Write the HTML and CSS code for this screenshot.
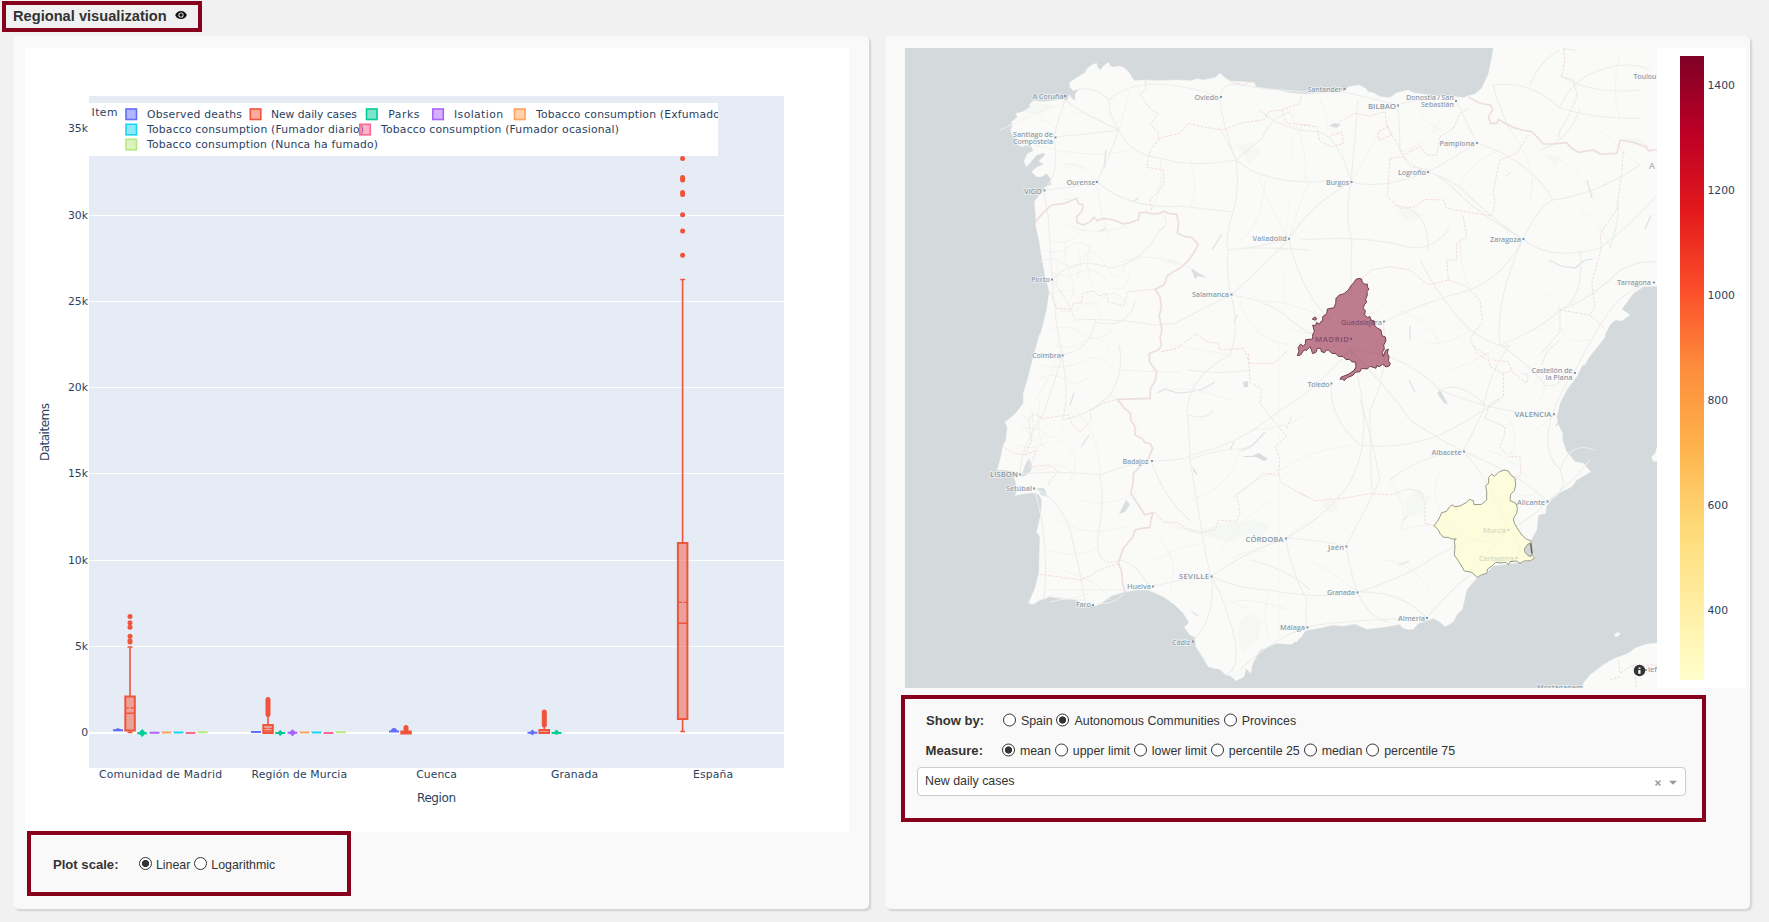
FILE: index.html
```html
<!DOCTYPE html>
<html lang="en">
<head>
<meta charset="utf-8">
<title>Regional visualization</title>
<link rel="stylesheet" href="styles.css">
</head>
<body>
<header class="title marked">
  <h1>Regional visualization</h1>
  <svg class="eye" width="12" height="10" viewBox="0 0 12 10"><path d="M6 .9C3.200 .9 1 2.600 .2 5 1 7.400 3.200 9.100 6 9.100S11 7.400 11.800 5C11 2.600 8.800 .9 6 .9z"/><circle cx="6" cy="5" r="2.600" fill="#f1f1f1"/><circle cx="6" cy="5" r="1.700"/></svg>
</header>
<main class="cards">
<section class="card left">
  <svg class="chart" width="824" height="784" viewBox="25 48 824 784">
    <defs>
      <clipPath id="legendClip"><rect x="89" y="103" width="629" height="53"/></clipPath>
    </defs>
    <rect x="25" y="48" width="824" height="784" fill="#fff"/>
    <rect x="89" y="96" width="695" height="672" fill="#e5ecf6"/>
    <path d="M89 215.500H784M89 301.500H784M89 387.500H784M89 473.500H784M89 560.500H784M89 646.500H784" stroke="#fff"/>
    <path d="M89 733H784" stroke="#fff" stroke-width="2"/>

    <g class="boxes" fill="none" stroke-width="2">
      <g stroke="#636efa" fill="#636efa">
        <path d="M113 730.200h10M251 732h10M389 731.500h10M527.500 732.700h10"/>
        <path stroke="none" d="M391 731a3 3 0 1 1 6 0zM529.500 732.500l2.900-3 2.900 3-2.900 3z"/>
        <path stroke="none" d="M114 730l4-2 4 2z"/>
      </g>
      <g stroke="#ef553b">
        <g fill="#ef553b" fill-opacity=".5">
          <rect x="125.300" y="696.500" width="9.500" height="34"/>
          <rect x="263.300" y="725" width="9.500" height="8"/>
          <rect x="401.300" y="731.500" width="9.500" height="2"/>
          <rect x="539.500" y="730" width="9.500" height="3"/>
          <rect x="677.900" y="543" width="9.500" height="176"/>
        </g>
        <path stroke-width="1.600" d="M130 647.300V696M130 731V733M127.500 647h5M127.500 732.500h5M268 716V725M682.600 279V543M682.600 719V731.500M680.300 279.500h4.800M680.300 731.500h4.800M544.300 726v4M125 713.300h10M263 731h10M678 623.200h9.500" />
        <path stroke-width="1.200" stroke-dasharray="4 1.500" d="M125 707.800h10M263 728.500h10M678 602.400h9.500"/>
        <path stroke-width="5" stroke-linecap="round" d="M268 699.500V714.500M406 727.500V731M544.300 712V725M682.600 177.500V180M682.600 192.500V194.500M130 640.700V642"/>
      </g>
      <g fill="#ef553b">
        <circle cx="130" cy="616.500" r="2.500"/><circle cx="130" cy="622.700" r="2.500"/><circle cx="130" cy="627.300" r="2.500"/><circle cx="130" cy="636.300" r="2.500"/>
        <circle cx="682.600" cy="158.500" r="2.500"/><circle cx="682.600" cy="214.700" r="2.500"/><circle cx="682.600" cy="231" r="2.500"/><circle cx="682.600" cy="255.300" r="2.500"/>
      </g>
      <path stroke="#00cc96" d="M137.200 733.200h10M275.200 733h10M551.500 733h10"/>
      <path fill="#00cc96" d="M138.500 733l3.700-4 3.700 4-3.700 4zM277 733l3.200-3 3.200 3-3.200 3zM553 733l3.500-3.600 3.500 3.600-3.500 2z"/>
      <path stroke="#ab63fa" d="M149.500 732.800h10M287.500 732.800h10"/>
      <path fill="#ab63fa" d="M288.700 732.700l3.800-3.500 3.800 3.500-3.800 3.500z"/>
      <path stroke="#ffa15a" d="M161.500 732.500h10M299.500 732.600h10"/>
      <path stroke="#19d3f3" d="M173.500 732.500h10M311.500 732.500h10"/>
      <path stroke="#ff6692" d="M185.500 732.900h10M323.500 732.900h10"/>
      <path stroke="#b6e880" d="M197.700 732.300h10M335.700 732.300h10"/>
    </g>

    <rect x="89" y="103" width="629" height="53" fill="#fff"/>
    <g class="swatch">
      <rect x="126" y="109" width="10.500" height="10.500" fill="#636efa" stroke="#636efa"/>
      <rect x="250.300" y="109" width="10.500" height="10.500" fill="#ef553b" stroke="#ef553b"/>
      <rect x="366.500" y="109" width="10.500" height="10.500" fill="#00cc96" stroke="#00cc96"/>
      <rect x="432.800" y="109" width="10.500" height="10.500" fill="#ab63fa" stroke="#ab63fa"/>
      <rect x="514.500" y="109" width="10.500" height="10.500" fill="#ffa15a" stroke="#ffa15a"/>
      <rect x="126" y="124.300" width="10.500" height="10.500" fill="#19d3f3" stroke="#19d3f3"/>
      <rect x="126" y="139.300" width="10.500" height="10.500" fill="#b6e880" stroke="#b6e880"/>
    </g>
    <g class="tick" clip-path="url(#legendClip)">
      <text x="91.500" y="115.500" textLength="26">Item</text>
      <text x="147" y="118.300" textLength="95">Observed deaths</text>
      <text x="271" y="118.300" textLength="86">New daily cases</text>
      <text x="388.300" y="118.300" textLength="31">Parks</text>
      <text x="454" y="118.300" textLength="49">Isolation</text>
      <text x="536" y="118.300" textLength="193">Tobacco consumption (Exfumador)</text>
      <text x="147" y="133.300" textLength="217">Tobacco consumption (Fumador diario)</text>
      <text x="381" y="133.300" textLength="238">Tobacco consumption (Fumador ocasional)</text>
      <text x="147" y="148.300" textLength="231">Tobacco consumption (Nunca ha fumado)</text>
    </g>
    <g class="swatch"><rect x="359.800" y="124.300" width="10.500" height="10.500" fill="#ff6692" stroke="#ff6692"/></g>

    <g class="tick" text-anchor="end">
      <text x="88" y="132">35k</text><text x="88" y="219">30k</text><text x="88" y="305">25k</text><text x="88" y="391">20k</text><text x="88" y="477">15k</text><text x="88" y="564">10k</text><text x="88" y="650">5k</text><text x="88" y="736">0</text>
    </g>
    <g class="tick">
      <text x="99" y="778.300" textLength="123">Comunidad de Madrid</text>
      <text x="251.500" y="778.300" textLength="95.500">Región de Murcia</text>
      <text x="416.300" y="778.300" textLength="40.500">Cuenca</text>
      <text x="551" y="778.300" textLength="47">Granada</text>
      <text x="693" y="778.300" textLength="40">España</text>
    </g>
    <g class="axis">
      <text x="417" y="802.300" textLength="39">Region</text>
      <text transform="translate(49 461) rotate(-90)" textLength="58">Dataitems</text>
    </g>
  </svg>
  <div class="scale marked">
    <b>Plot scale:</b>
    <span class="radio on"></span><span>Linear</span><span class="radio"></span><span>Logarithmic</span>
  </div>
</section>

<section class="card right">
  <div class="plot">
  <svg class="map" width="752" height="640" viewBox="905 48 752 640">
    <rect x="905" y="48" width="752" height="640" fill="#d4dadc"/>
    <g class="land">
      <path transform="translate(890 30) scale(.33333)" d="M1300 196L1245 193 1200 188 1160 180 1120 175 1097 170 1093 158 1060 155 1020 153 1003 142 990 130 975 143 940 150 920 146 905 152 860 150 800 152 765 150 732 152 722 135 715 125 700 112 685 108 672 112 660 108 655 97 640 108 632 120 622 112 620 100 605 105 590 118 585 128 565 140 550 150 538 158 540 172 550 182 566 176 555 195 556 212 545 205 538 194 530 215 520 208 490 212 460 215 430 212 418 225 422 235 400 245 378 250 382 262 365 275 367 288 362 300 367 315 380 330 385 345 395 350 410 345 425 350 430 362 412 372 402 395 410 410 425 392 440 375 462 368 465 376 446 393 462 402 440 412 425 425 440 440 455 440 470 430 482 445 484 465 466 470 455 485 445 500 433 515 437 550 438 590 447 630 455 680 465 735 478 785 470 840 455 900 440 970 430 1010H1300z"/>
      <path transform="translate(1300 30) scale(.33333)" d="M-15 196L0 193 60 190 105 187 135 182 145 170 178 165 200 178 203 185 220 188 240 200 270 203 290 188 325 180 340 188 380 194 430 200 465 200 490 203 505 197 525 192 545 175 566 130 575 85 581 50H1080V768L1030 770 1000 790 965 838 990 855 965 872 945 870 930 885 905 930 865 985 855 1005H-60z"/>
      <path transform="translate(890 340) scale(.33333)" d="M450 -20L430 50 415 110 400 160 400 190 375 222 345 247 352 262 348 300 338 320 333 350 322 390 345 390 375 395 385 402 372 410 378 432 382 450 375 467 395 462 425 458 445 462 455 480 453 520 440 577 450 590 448 650 447 700 435 745 416 790 430 793 450 780 480 770 530 775 560 780 590 795 620 797 640 785 665 767 700 757 740 750 775 750 820 770 855 795 880 820 897 848 883 862 900 885 915 890 918 920 940 955 955 980 972 985 990 988 1005 1003 1022 1008 1038 1022 1062 1010 1068 985 1082 1000 1088 970 1110 930 1160 910 1205 913 1235 890 1245 872 1300 862V-20z"/>
      <path transform="translate(1300 340) scale(.33333)" d="M-60 900L-10 905 5 885 22 864 60 863 100 855 130 858 165 852 200 867 250 862 300 853 305 862 320 868 340 868 355 850 400 835 420 845 435 860 460 845 470 825 487 808 500 750 532 712 560 698 580 677 625 672 690 662 704 653 697 635 692 602 710 570 715 525 737 520 738 500 765 465 815 440 830 420 872 395 850 370 825 365 800 335 787 300 788 280 775 255 770 230 780 190 800 150 830 110 850 70 880 35 915 -8V-30H-60zM1071 910L1040 912 1005 925 985 940 940 957 910 975 870 1005 850 1030 848 1050H1080zM1071 322L1066 340 1055 350 1060 365 1075 362zM942 886l10-9 10 4-12 10z"/>
    </g>
    <g class="water">
      <path d="M1021 477l4-12 4-7 3 8-1 5-6 5zM1037 488l7 0 4 9-7-2zM1126 500l4 4-5 8-6 2 4-8zM1191 268l6 4 10 6-9-2-3 3zM1329 126l5-3 7 1-4 4zM1237 387l7 0-1-5 5-1 0 6zM1437 393l7 10 4 1-8-14zM1243 456l9 0 7-3 9 6-4 2-8-4-12 0zM1559 420l-4 6 3-1zM1192 466l7 10-5-4zM1533 548l2-6 2 4z"/>
      <path class="river" d="M1157 393l8-4 12 4 12-1 14-3 12-7M1241 451l12-6 12-13M1549 260l12 6 14 2 10-8 8-1M1106 150l-2 18M1587 180l5 18M1651 215l-6 14M1409 380l6 12M1192 612l6 4M1230 450l4-8M1070 405l4-12M1081 447l8-12M1410 340l0-14M1399 565l10-4M1404 520l6-8M1212 250l10-16M1133 202l5-4M1100 231l6-3M1234 322l3-7"/>
    </g>
    <g class="park">
      <path d="M1151 516l30 14 30 7 18 6 20-10 10 6 12-14-20-5-28 4-26 6-22-4zM1240 620l10-6 12 6-4 20-14 12-6-10zM1405 500l14-10 12 8-8 14-16 6zM1321 500l10-4 8 12-10 6zM1545 155l16 2-6 8zM1022 112l14-9 16 2-12 10zM1237 145l14-3 10 10-12 12zM1395 212l16-4 12 8-14 6zM1618 137l22 2 10 8-18-2zM1165 262l8-4 7 8z"/>
    </g>
    <g class="road">
      <path d="M1054 137Q1058 118 1065 100Q1080 112 1119 130Q1130 155 1160 158Q1190 168 1236 160M1044 190Q1060 175 1054 137Q1080 135 1119 130M1044 190Q1070 188 1097 182Q1112 150 1119 130M1097 182Q1130 210 1180 206Q1215 210 1233 212M1119 130Q1108 115 1109 100Q1120 88 1148 84Q1185 84 1220 97M1078 90Q1095 85 1109 100M1220 97Q1222 125 1236 160Q1240 190 1233 212Q1225 235 1228 250Q1226 275 1231 295M1220 97Q1222 84 1235 84Q1290 94 1344 92Q1370 98 1398 105Q1425 96 1456 100M1236 160Q1225 135 1219 128M1236 160Q1248 150 1262 138Q1270 118 1290 112M1236 160Q1260 182 1315 182Q1335 180 1351 182M1228 250Q1255 248 1289 239Q1310 205 1351 182M1228 250Q1250 246 1310 250M1231 295Q1260 270 1289 239M1231 295Q1200 310 1172 325M1231 295Q1240 330 1230 355Q1190 375 1187 410Q1190 435 1190 460Q1200 520 1205 550Q1208 565 1211 576M1231 295Q1270 300 1290 320Q1310 335 1325 340M1289 239Q1300 290 1330 320M1351 182Q1344 215 1352 240Q1350 270 1352 300M1351 182Q1355 140 1358 100M1351 182Q1380 190 1428 172Q1450 160 1477 143Q1465 120 1456 100M1398 105Q1400 135 1400 152Q1415 170 1428 172Q1440 175 1455 190Q1480 215 1523 239Q1550 262 1600 248Q1625 230 1657 195M1428 172Q1458 182 1470 197Q1500 225 1530 244M1523 239Q1505 275 1470 290Q1430 300 1383 322M1523 239Q1540 205 1553 200Q1530 160 1477 143M1553 200Q1595 195 1640 165M1300 240Q1360 235 1400 245Q1430 255 1450 228M1395 205Q1430 210 1428 250"/>
      <path d="M1052 280Q1075 255 1110 268Q1140 265 1160 230Q1170 225 1164 215M1052 280Q1050 240 1048 215Q1045 200 1044 190M1052 280Q1055 320 1062 355Q1050 400 1040 420Q1020 450 1020 474M1052 280Q1068 300 1075 320Q1110 318 1155 325Q1160 325 1175 323M1062 355Q1090 350 1095 322Q1130 330 1135 300M1062 355Q1070 400 1062 420Q1090 415 1110 395Q1125 370 1119 345M1020 474Q1060 470 1100 475Q1125 465 1151 461Q1190 460 1190 455Q1240 445 1280 410Q1310 395 1350 350M1034 488Q1060 500 1070 530Q1080 570 1085 600M1034 488Q1050 540 1044 600M1100 475Q1105 500 1098 535Q1095 570 1120 560Q1140 565 1150 590M1151 461Q1165 500 1190 520M1153 586Q1180 580 1211 576Q1215 600 1205 625Q1198 635 1193 642M1211 576Q1250 550 1286 538Q1320 520 1345 490Q1380 440 1350 350M1211 576Q1240 590 1270 590Q1320 600 1357 592M1211 576Q1225 600 1235 640Q1240 670 1225 675M1286 538Q1290 570 1307 600Q1305 615 1307 627Q1270 640 1240 670M1307 627Q1340 620 1427 618Q1450 590 1470 575Q1485 555 1508 530M1346 546Q1350 570 1357 592Q1400 580 1430 560Q1460 540 1508 530M1357 592Q1370 620 1390 622M1427 618Q1400 590 1357 592M1187 370Q1220 375 1250 370M1187 415Q1210 420 1213 410M1190 460Q1210 450 1250 448M1250 560Q1290 570 1310 590M1286 538Q1320 540 1346 546Q1360 520 1380 480Q1370 430 1360 400"/>
      <path d="M1350 350Q1390 390 1410 420Q1440 440 1463 451Q1490 480 1508 530Q1530 520 1547 502Q1530 480 1463 451M1350 350Q1400 350 1440 390Q1500 415 1553 414Q1540 450 1560 470Q1570 490 1547 502M1383 322Q1390 370 1370 410Q1370 460 1372 490M1331 384Q1330 420 1360 445Q1400 450 1440 435Q1470 420 1500 400M1463 451Q1420 455 1390 480M1463 451Q1480 420 1485 405Q1460 380 1440 390M1553 414Q1560 390 1574 373Q1590 340 1610 310Q1625 290 1653 282M1500 345Q1495 300 1523 239M1500 345Q1530 365 1545 385Q1560 390 1565 370M1500 345Q1540 330 1560 310Q1590 300 1620 270Q1640 260 1657 262M1610 248Q1620 220 1618 200M1510 345Q1490 370 1484 405M1547 502Q1575 480 1590 460M1508 530Q1490 545 1470 540M1516 558Q1525 545 1508 530M1493 85Q1530 80 1560 108Q1600 120 1640 118M1493 85Q1500 110 1510 130M1580 108Q1570 140 1540 150M1530 85Q1540 60 1560 50M1560 108Q1570 80 1600 70Q1630 60 1650 70M1560 75Q1590 95 1640 90M1260 110Q1280 130 1320 132Q1340 140 1351 182M1420 260Q1440 300 1470 330Q1500 350 1510 345M1580 250Q1585 300 1560 310M1595 450Q1570 440 1560 470"/>
      <path class="thin" d="M1000 130Q1030 115 1060 104M1035 145Q1090 160 1130 150M1060 165Q1085 160 1097 182M1110 240Q1100 215 1097 182M1060 220Q1090 240 1130 225M1120 262Q1150 250 1190 268M1130 90Q1125 110 1119 130M1160 158Q1165 190 1150 212M1190 160Q1200 190 1190 206M1260 180Q1270 210 1289 239M1265 182Q1260 230 1240 240M1310 182Q1300 200 1289 239M1290 112Q1310 150 1305 182M1320 100Q1330 120 1326 130M1380 130Q1370 150 1351 182M1400 152Q1430 145 1440 120M1420 110Q1425 125 1440 130M1460 185Q1470 160 1500 150M1510 130Q1540 170 1530 200M1240 300Q1250 340 1290 345M1255 300Q1290 300 1330 320M1175 345Q1200 350 1230 355M1180 372Q1150 372 1120 370M1170 390Q1190 385 1230 400M1110 395Q1130 410 1140 430M1070 405Q1100 430 1100 475M1060 440Q1085 455 1070 480M1050 450Q1030 440 1020 420M1035 400Q1050 380 1055 360M1080 500Q1110 510 1140 490M1060 520Q1090 540 1130 525M1045 550Q1080 560 1100 545M1060 570Q1100 580 1110 600M1045 590Q1090 590 1130 590M1155 560Q1180 545 1200 545M1170 590Q1180 560 1160 540M1220 550Q1240 520 1270 500M1190 500Q1230 490 1240 450M1270 590Q1260 615 1270 640M1235 600Q1260 600 1290 610M1310 560Q1330 570 1357 592M1330 500Q1310 520 1286 538M1350 445Q1310 450 1280 470M1280 470Q1250 480 1230 500M1310 410Q1290 430 1250 430M1400 530Q1430 520 1460 530M1390 480Q1410 510 1400 530M1380 560Q1410 560 1430 590M1440 470Q1430 490 1440 510M1485 450Q1510 455 1530 480M1510 420Q1520 440 1510 455M1420 340Q1440 350 1470 330M1400 310Q1430 320 1440 345M1450 370Q1480 360 1500 345M1560 330Q1570 345 1590 340M1540 290Q1560 300 1560 310M1460 240Q1460 270 1470 290M1580 210Q1600 220 1610 248M1560 160Q1590 180 1595 200M1600 130Q1620 150 1640 165M1620 55Q1610 90 1620 118"/>
      <path class="thin" d="M1040 262q12-8 24 2t20-6 22 8 20-4M1044 250q14 6 26-4t22 6M1048 238q10 8 22 2t16-12M1050 272q16 8 30 0t28 10 22-8M1056 292q14-6 22 6t24 0 26 8M1058 308q14 8 24-2t20 10M1056 262q4 14-2 28M1066 240q-4 20 4 34t-2 30M1078 250q6 16-2 30M1090 245q-6 20 2 40M1050 330q18-8 32 4t30-4M1054 345q16 6 30-4t26 8M1042 365q22 6 40-4t32 8M1040 378q14-6 26 2t24-4M1022 415q12 10 24 4M1020 430q14-6 26 4t18-8M1018 445q14 6 28-2M1030 405q6 20 0 40M1040 400q-4 24 2 46M1028 465q10 8 22 2t26 8M1050 602q20-6 40 0t34-8M1048 596q20 6 40-2M1320 330q-14 6-26 0M1355 310q12 8 24 0M1060 195q8 8 20 2M1065 170q8-8 18-2M1070 115q14-6 22 4M1040 120q12 2 18 10M1510 490q14 10 28 2M1495 520q14-8 26 2M1540 400q8-14 2-26M1535 430q12-6 18-16M1230 560q16-12 34-8M1220 590q10 14 26 18"/>
    </g>
    <g class="border">
      <path transform="translate(890 30) scale(.33333)" d="M437 575L460 548 485 525 525 520 560 505 564 520 580 525 575 545 560 560 562 578 580 585 600 575 612 562 622 572 640 565 670 570 685 575 700 582 720 578 745 570 748 548 770 547 785 552 812 550 820 543 835 550 860 553 866 580 862 610 885 620 905 622 925 643 910 670 895 692 870 715 850 725 832 738 822 765 795 778 810 800 814 830 808 860 816 900 810 925 815 945 805 960 778 970"/>
      <path transform="translate(890 340) scale(.33333)" d="M778 40L778 65 800 95 795 125 782 145 780 175 683 178 700 202 722 220 722 240 735 260 735 285 755 295 765 308 780 310 788 325 775 355 755 375 730 400 730 425 722 460 742 490 765 525 790 517 783 540 780 562 755 565 735 570 728 592 700 625 685 670 695 695 698 730 705 757"/>
      <path transform="translate(1300 30) scale(.33333)" d="M505 200L530 215 550 222 572 225 578 240 565 260 572 280 590 280 596 268 615 280 640 292 665 300 695 305 715 325 730 342 760 342 800 338 815 355 835 367 880 360 900 372 950 370 956 350 960 330 1000 337 1040 352 1045 362 1071 360"/>
    </g>
    <g class="region">
      <path transform="translate(890 30) scale(.33333)" d="M765 152L768 180 750 190 760 210 785 240 805 250 780 285 805 305 805 330 780 360 770 412 820 420 822 465 780 510 785 545M805 325L870 310 895 280 935 290 1000 300 1050 280 1125 268 1135 245 1175 240 1190 280 1260 285M1175 240L1230 220 1235 195M1020 153L1060 165 1085 155M482 788L500 835 545 838 550 818 575 820 578 790 610 782 625 798 650 790 655 815 700 828 715 785 795 778M815 965L860 955 920 912 950 935 985 940 990 960 1060 955 1075 990"/>
      <path transform="translate(1300 30) scale(.33333)" d="M0 285L50 290 60 335 95 350 130 340 125 305 90 318M120 275L165 250 210 258 255 245 260 285 275 315 235 330 235 305 265 290M260 285L310 375 360 350 380 375 410 375 420 320 460 295 480 250 505 235M270 385L262 500 300 535 345 530 375 508 430 510 440 535 495 545 575 558 585 520 580 480 600 390 650 370 685 315M270 385L310 380 330 410 390 420M490 560L500 620 470 640 470 690 440 690 445 750 385 765 330 720 270 710 215 720 185 745M445 750L500 770 540 810 548 875 510 925 530 970 560 988M790 56L795 90 785 140 820 150 832 200 805 260 780 300 775 325M970 365L965 430 950 540 900 610 905 650 875 760 885 830 870 855 780 840 780 905 725 970M870 855L915 895M615 440L635 425M790 56L830 62"/>
      <path transform="translate(890 340) scale(.33333)" d="M683 178L640 190 600 212 605 240 570 275 545 250 535 225 460 235 430 222 415 240 425 300 405 345 370 340 338 320M405 345L440 330 420 380 480 375 505 395 480 420 475 440M450 703L500 710 575 720 630 690 685 670M795 517L820 545 860 548 890 565 925 578 975 570 985 540 1040 545 1050 515 1040 465 1080 435 1120 400 1165 405 1175 430 1260 475M1165 405L1170 360 1155 320 1190 290 1110 190 1115 150 1090 130M1190 265L1205 230M1075 40L1080 130M1075 70L1150 70 1190 35M815 35L860 25"/>
      <path transform="translate(1300 340) scale(.33333)" d="M0 460L45 482 130 475 215 460 270 465 325 447 362 455 375 490 375 550 402 557M522 20L565 50 570 80 610 100 635 90 625 65 575 60M610 100L610 170 570 190 555 235 615 260 612 290 600 320 625 350 660 350 662 400 647 420M635 95L680 130 685 105 665 100M725 75L740 35 780 0M1071 975L1000 975 960 1000 955 960M1000 975L1010 1040M930 1020L960 1010"/>
    </g>
    <g class="city">
      <g text-anchor="end">
        <text x="1063.500" y="99.200" textLength="31">A Coruña</text>
        <text x="1053" y="136.800" textLength="40">Santiago de</text>
        <text x="1053" y="143.500" textLength="40">Compostela</text>
        <text x="1095.500" y="184.500" textLength="29">Ourense</text>
        <text x="1218.500" y="99.800" textLength="24">Oviedo</text>
        <text x="1286.500" y="241.300" textLength="34">Valladolid</text>
        <text x="1229" y="297" textLength="37">Salamanca</text>
        <text x="1050" y="282" textLength="19">Porto</text>
        <text x="1061" y="358" textLength="29">Coimbra</text>
        <text x="1341.500" y="91.500" textLength="34">Santander</text>
        <text x="1454" y="100" textLength="48">Donostia / San</text>
        <text x="1454" y="107" textLength="33">Sebastián</text>
        <text x="1474.500" y="145.500" textLength="35">Pamplona</text>
        <text x="1426" y="174.500" textLength="28">Logroño</text>
        <text x="1349" y="184.500" textLength="23">Burgos</text>
        <text x="1521" y="241.500" textLength="31">Zaragoza</text>
        <text x="1651" y="285" textLength="34">Tarragona</text>
        <text x="1382" y="324.800" textLength="41">Guadalajara</text>
        <text x="1148.500" y="464" textLength="26">Badajoz</text>
        <text x="1032" y="491" textLength="26">Setúbal</text>
        <text x="1151" y="589" textLength="24">Huelva</text>
        <text x="1091" y="607" textLength="15">Faro</text>
        <text x="1190" y="644.500" textLength="18">Cádiz</text>
        <text x="1305" y="630" textLength="25">Málaga</text>
        <text x="1329.500" y="386.500" textLength="22">Toledo</text>
        <text x="1572.500" y="372.800" textLength="41">Castellón de</text>
        <text x="1572.500" y="379.500" textLength="27">la Plana</text>
        <text x="1461.500" y="454.500" textLength="30">Albacete</text>
        <text x="1545" y="504.500" textLength="28">Alicante</text>
        <text x="1506" y="532.500" textLength="23">Murcia</text>
        <text x="1514" y="561" textLength="35">Cartagena</text>
        <text x="1344" y="549.500" textLength="16">Jaén</text>
        <text x="1355" y="595" textLength="28">Granada</text>
        <text x="1425" y="621" textLength="27">Almería</text>
        <text x="1583" y="690" textLength="46">Mostaganem</text>
        <g class="big">
          <text x="1042" y="193.700" textLength="18">VIGO</text>
          <text x="1396" y="108.500" textLength="28">BILBAO</text>
          <text x="1349" y="341.800" textLength="34">MADRID</text>
          <text x="1018" y="477" textLength="28">LISBON</text>
          <text x="1209" y="579.300" textLength="30">SEVILLE</text>
          <text x="1283.500" y="541.700" textLength="38">CÓRDOBA</text>
          <text x="1551.500" y="417.200" textLength="37">VALENCIA</text>
        </g>
      </g>
      <text x="1633.500" y="79.300" textLength="23">Toulou</text>
      <text x="1648" y="672.300">lef</text>
      <text class="country" x="1649" y="169">A</text>
    </g>
    <path class="dots" d="M1064 96h2M1054.500 137.500h2M1096 182h2M1220 97h2M1288 238.800h2M1230.500 294.500h2M1051 279.600h2M1061.700 355.500h2M1343.500 89h2M1455 101h2M1476 143h2M1427 172h2M1350.500 182h2M1522.500 239h2M1653 282.500h2M1383 321.500h2M1151 461h2M1033 488.500h2M1152 586.500h2M1092 605h2M1192 641.500h2M1306.500 627.500h2M1330.500 383.500h2M1574 373h2M1463 451.500h2M1546.500 501.500h2M1507.500 530h2M1515.500 558h2M1345.500 546.500h2M1356.500 592.500h2M1426 618h2M1043.500 190.500h2M1397 105.500h2M1350 338.700h2M1019 474.500h2M1210.500 576.500h2M1285 538.500h2M1553 414.300h2M1645 670h2"/>
    <path class="madrid" transform="translate(1280 265) scale(.33333)" d="M237 40L245 42 247 52 255 58 262 57 262 66 267 72 261 80 262 90 257 103 260 112 254 118 249 130 256 136 254 150 262 157 270 155 274 166 283 168 283 180 290 188 303 195 306 212 316 216 318 228 311 240 313 252 307 262 310 274 317 256 325 252 322 265 327 275 325 288 331 295 328 303 318 306 308 298 298 305 290 302 288 310 270 304 262 312 245 310 240 320 226 322 220 330 210 335 202 338 192 347 188 342 180 343 184 336 205 328 222 316 228 306 227 292 215 290 208 283 198 284 190 275 175 274 168 266 155 265 145 255 138 256 134 263 124 260 122 250 112 250 108 262 98 266 94 255 90 245 80 256 72 255 62 270 52 272 57 258 54 248 62 237 70 244 76 236 77 224 98 222 98 208 103 200 98 180 106 182 110 172 118 178 122 170 128 168 128 155 140 146 142 132 162 128 167 115 168 100 178 90 192 86 205 75 213 62 222 52 228 43zM97 163L101 158 106 156 110 162 106 166 102 164z"/>
    <path class="murcia" transform="translate(1300 340) scale(.33333)" d="M402 557L412 545 420 530 425 518 440 514 446 504 456 494 463 500 480 498 500 487 508 478 520 482 522 494 545 493 560 480 560 455 557 437 566 430 566 412 575 402 583 409 595 397 612 390 625 393 632 405 645 415 647 435 643 452 632 463 630 482 648 490 652 505 650 520 640 535 643 550 655 570 668 588 680 598 692 602 698 640 698 648 704 653 692 662 672 663 660 670 650 663 630 665 625 675 618 667 600 669 587 667 578 676 563 687 560 700 545 704 532 712 515 697 493 693 483 675 463 645 465 620 463 600 469 597 455 597 445 592 430 592 420 580 414 568z"/>
    <path class="lagoon" d="M1530 543.500l-2 .5-3.500 4.500.3 3.500 3 3.500 3 1.200 1-3.200z"/>
    <path d="M1530.800 543l.8 10" stroke="#444" stroke-width=".8" fill="none"/>
    <circle cx="1639.500" cy="670.500" r="5.700" fill="#333"/>
    <path d="M1638.600 667.600h1.900v1.500h-1.900zM1638.300 670h2.200v3.700h-2.200z" fill="#fff"/>
  </svg>
  <svg class="colorbar" width="89" height="640" viewBox="1657 48 89 640">
    <defs><linearGradient id="ylorrd" x1="0" y1="1" x2="0" y2="0">
      <stop offset="0" stop-color="#ffffcc"/><stop offset=".125" stop-color="#ffeda0"/><stop offset=".25" stop-color="#fed976"/><stop offset=".375" stop-color="#feb24c"/><stop offset=".5" stop-color="#fd8d3c"/><stop offset=".625" stop-color="#fc4e2a"/><stop offset=".75" stop-color="#e31a1c"/><stop offset=".875" stop-color="#bd0026"/><stop offset="1" stop-color="#800026"/>
    </linearGradient></defs>
    <rect x="1657" y="48" width="89" height="640" fill="#fff"/>
    <rect x="1680" y="56" width="24" height="624" fill="url(#ylorrd)"/>
    <g class="tick"><text x="1707.500" y="89">1400</text><text x="1707.500" y="194">1200</text><text x="1707.500" y="299">1000</text><text x="1707.500" y="404">800</text><text x="1707.500" y="509">600</text><text x="1707.500" y="614">400</text></g>
  </svg>
  </div>
  <div class="controls marked">
    <div class="row show">
      <b>Show by:</b>
      <span class="radio"></span><span>Spain</span><span class="radio on"></span><span>Autonomous Communities</span><span class="radio"></span><span>Provinces</span>
    </div>
    <div class="row measure">
      <b>Measure:</b>
      <span class="radio on"></span><span>mean</span><span class="radio"></span><span>upper limit</span><span class="radio"></span><span>lower limit</span><span class="radio"></span><span>percentile 25</span><span class="radio"></span><span>median</span><span class="radio"></span><span>percentile 75</span>
    </div>
    <div class="select">
      <span class="value">New daily cases</span>
      <svg width="24" height="10" viewBox="0 0 24 10"><path d="M1.500 2.500l5 5M6.500 2.500l-5 5" stroke="#999" stroke-width="1.500"/><path d="M15 2.700h8l-4 4z" fill="#999"/></svg>
    </div>
  </div>
</section>
</main>
</body>
</html>
```
FILE: styles.css
```css
* { box-sizing: border-box; }
body {
  margin: 0;
  height: 922px;
  overflow: hidden;
  background: #f1f1f1;
  color: #333;
  font: 12.4px "Liberation Sans", Arial, sans-serif;
}
svg { display: block; }
.marked { border: 4px solid #87001c; }
.title {
  display: flex;
  align-items: center;
  width: 200px;
  height: 31px;
  margin: 1px 0 4px 2px;
  padding: 0 0 2px 7px;
}
h1 { margin: 0; width: 162px; font-size: 14.65px; line-height: 20px; white-space: nowrap; }
.eye { margin-top: -1px; fill: #111; }
.cards { display: flex; gap: 16px; margin-left: 13px; }
.card {
  height: 873px;
  background: #f9f9f9;
  border-radius: 5px;
  box-shadow: 2px 2px 2px lightgrey;
}
.left { width: 856px; padding: 12px; }
.right { width: 865px; padding: 12px 0 0 16px; }

.tick text { font: 10.8px "DejaVu Sans", Verdana, sans-serif; fill: #2a3f5f; }
.axis text { font: 12px "DejaVu Sans", Verdana, sans-serif; fill: #2a3f5f; }
.swatch rect { fill-opacity: .5; stroke-width: 1.6; }

.radio {
  flex: none;
  width: 13px;
  height: 13px;
  border: 1px solid #333;
  border-radius: 50%;
  background: #fff;
  margin: 0 5px 0 3.900px;
  transform: translateY(-1.500px);
}
.on { background: radial-gradient(circle, #333 3.200px, #fff 4px); }
b { font-size: 13.1px; white-space: nowrap; transform: translateY(-1px); }
.row, .scale { display: flex; align-items: center; white-space: nowrap; }
.scale {
  position: relative;
  width: 324px;
  height: 65px;
  margin: -1px 0 0 2px;
  padding: 3px 0 0 22px;
}
.scale b { width: 82px; }
.scale .radio { margin-right: 4px; transform: translateY(-2px); }

.plot { display: flex; padding-left: 4px; }
.controls { width: 805px; height: 127px; margin-top: 7px; padding: 14px 16px 0 12px; }
.row { height: 16px; }
.show { padding-left: 9px; }
.show b { width: 73px; }
.measure { margin-top: 14px; padding-left: 8.500px; }
.measure b { width: 72.500px; }
.select {
  display: flex;
  justify-content: space-between;
  align-items: center;
  width: 769px;
  height: 29px;
  margin-top: 8px;
  padding: 0 7px 1px 7px;
  background: #fff;
  border: 1px solid #ccc;
  border-radius: 4px;
}
.select svg { margin-top: 3px; }

.land { fill: #fafaf8; stroke: #eef0ef; stroke-width: 1.5; stroke-linejoin: round; paint-order: stroke; }
.water { fill: #d9dfe1; }
.river { fill: none; stroke: #dde3e5; stroke-width: 1.2; }
.park { fill: #f5f7f4; }
.road { fill: none; stroke: #ededec; stroke-width: 1.1; }
.thin { stroke: #f0f0ef; stroke-width: .9; }
.border { fill: none; stroke: #eedde0; stroke-width: 5; stroke-linejoin: round; }
.region { fill: none; stroke: #f1dbdf; stroke-width: 3; stroke-dasharray: 8 4; }
.city text {
  font: 600 7.4px "Open Sans", Inter, sans-serif;
  fill: #8f9eae;
  stroke: #fafaf8;
  stroke-opacity: .7;
  stroke-width: 1.5px;
  paint-order: stroke;
}
.city .big text { font-size: 7.800px; fill: #8898a9; }
.city .country { font-size: 9px; fill: #adb6c0; }
.dots { stroke: #8898a9; stroke-width: 2; }
.madrid { fill: rgba(128, 0, 38, .5); stroke: #5c2a3a; stroke-width: 2.5; }
.murcia { fill: rgba(255, 255, 204, .62); stroke: #9a9a8a; stroke-width: 3; }
.lagoon { fill: #cfd6d6; stroke: #85857a; stroke-width: .8; }
```
